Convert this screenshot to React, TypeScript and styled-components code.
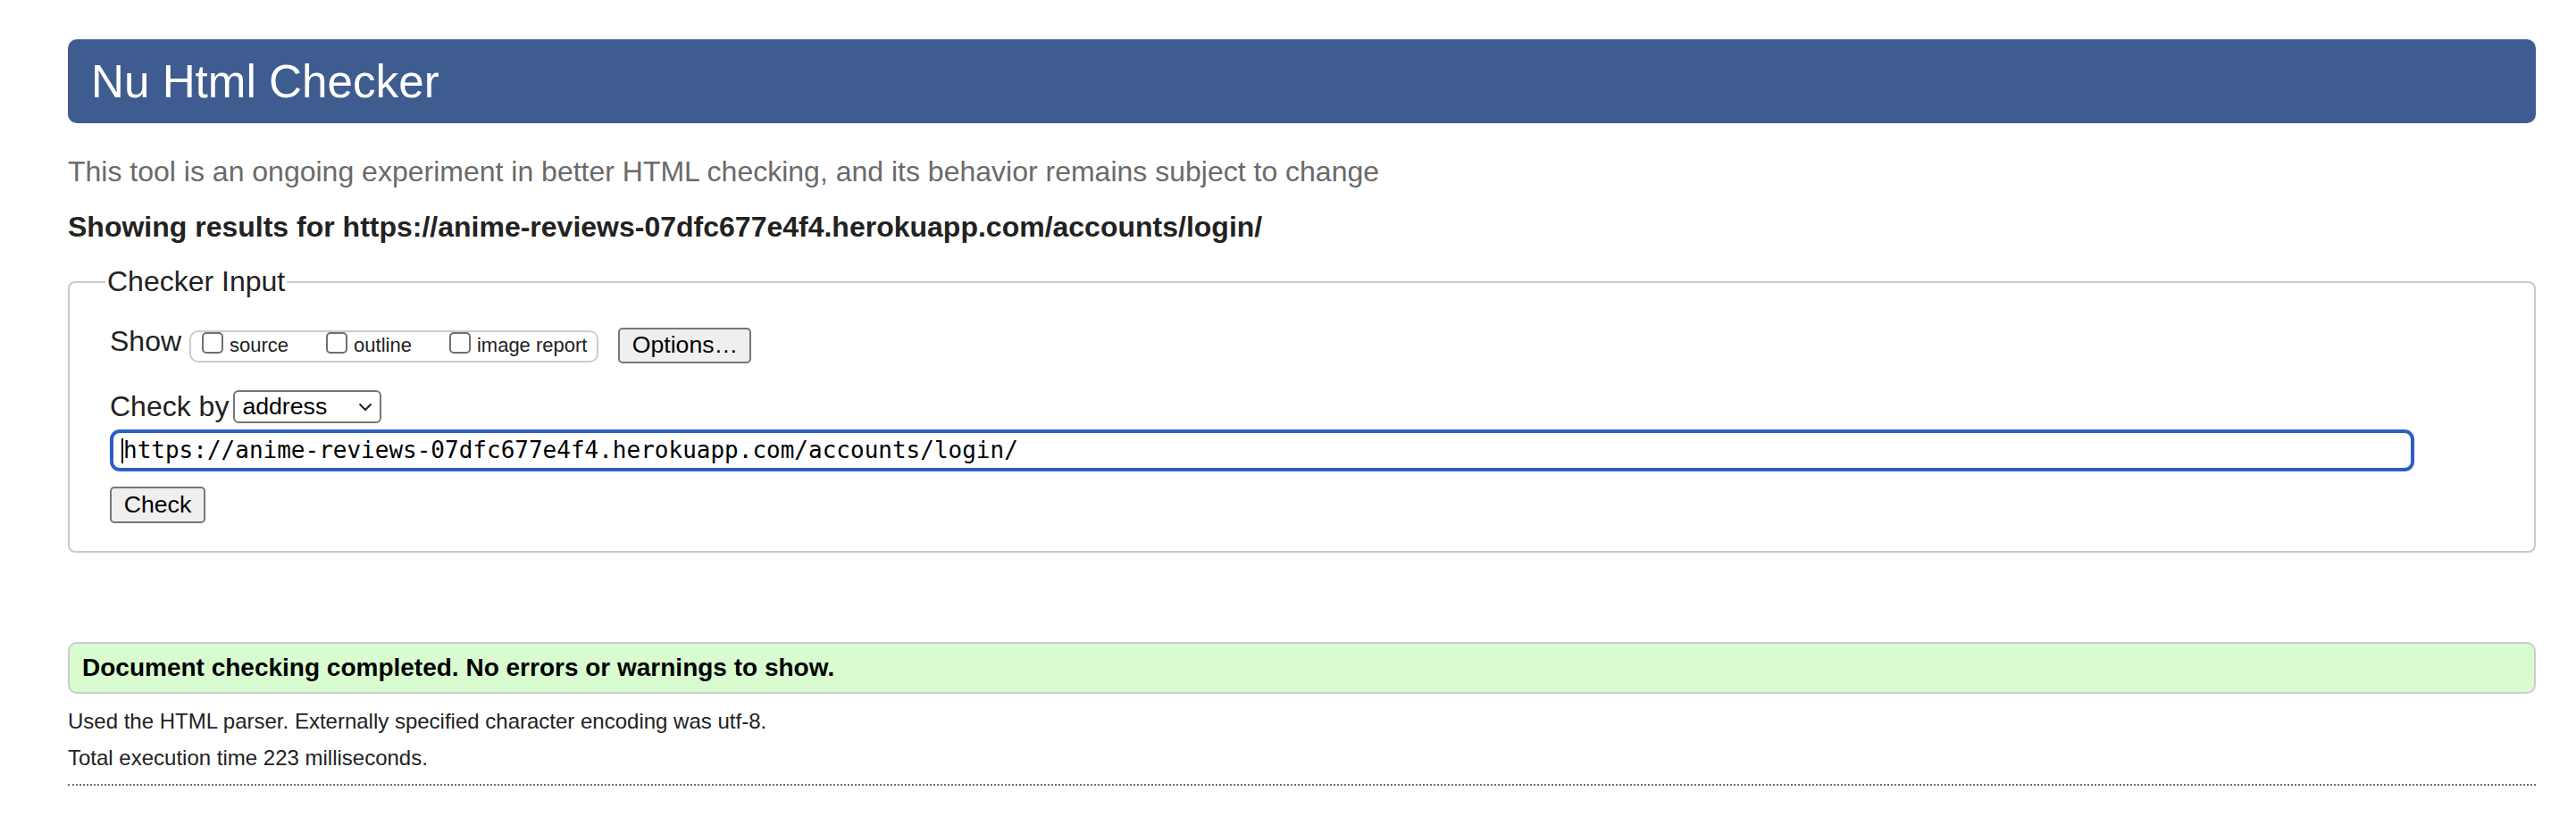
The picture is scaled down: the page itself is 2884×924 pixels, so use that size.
import styled, { createGlobalStyle } from "styled-components";

const GlobalStyle = createGlobalStyle`
  body {
    margin: 0;
    background: #ffffff;
    font-family: "Liberation Sans", Arial, Helvetica, sans-serif;
    color: #222222;
  }
`;

const Page = styled.div`
  padding: 44px 45px 40px 76px;
`;

const Title = styled.h1`
  margin: 0;
  height: 94px;
  display: flex;
  align-items: center;
  padding: 0 26px;
  background: #3e5c8f;
  border-radius: 10px;
  color: #ffffff;
  font-size: 51.2px;
  font-weight: normal;
`;

const Lead = styled.p`
  margin: 36px 0 0;
  font-size: 32px;
  color: #6a6a6a;
`;

const Results = styled.h2`
  margin: 25px 0 0;
  font-size: 32px;
  font-weight: bold;
  color: #222222;
`;

const Fieldset = styled.fieldset`
  margin: 24px 0 0;
  padding: 30px 40px 31px 45px;
  border: 2px solid #c8c8c8;
  border-radius: 8px;
  min-width: 0;
`;

const Legend = styled.legend`
  margin-left: -5px;
  padding: 0 2px;
  font-size: 32px;
  color: #222222;
`;

const Row = styled.div<{ $mt?: number }>`
  display: flex;
  align-items: center;
  margin-top: ${(p) => p.$mt ?? 0}px;
`;

const ShowRow = styled.div`
  display: flex;
  align-items: flex-start;
`;

const Label = styled.span`
  font-size: 32px;
  color: #222222;
`;

const OptionGroup = styled.div`
  display: flex;
  align-items: flex-start;
  margin: 5.5px 0 0 9px;
  height: 32px;
  padding: 0 11px 0 12px;
  border: 2px solid #cccccc;
  border-radius: 10px;
`;

const Choice = styled.label<{ $last?: boolean }>`
  display: flex;
  align-items: flex-start;
  gap: 7px;
  margin-right: ${(p) => (p.$last ? 0 : 42)}px;
  font-size: 22px;
  color: #222222;

  span {
    padding-top: 2px;
  }
`;

const Box = styled.input`
  appearance: none;
  width: 24px;
  height: 24px;
  margin: 0;
  border: 2px solid #6f6f6f;
  border-radius: 5px;
  background: #ffffff;
`;

const Button = styled.button<{ $w: number; $h: number; $mt?: number; $ml?: number }>`
  width: ${(p) => p.$w}px;
  height: ${(p) => p.$h}px;
  margin-top: ${(p) => p.$mt ?? 0}px;
  margin-left: ${(p) => p.$ml ?? 0}px;
  padding: 0;
  background: #efefef;
  border: 2px solid #767676;
  border-radius: 5px;
  font-family: "Liberation Sans", Arial, sans-serif;
  font-size: 26.67px;
  color: #000000;
`;

const SelectWrap = styled.div`
  position: relative;
  margin-left: 5px;
  width: 166px;
  height: 37px;

  svg {
    position: absolute;
    right: 10px;
    top: 14px;
    pointer-events: none;
  }
`;

const Select = styled.select`
  appearance: none;
  width: 100%;
  height: 100%;
  padding: 0 0 0 8px;
  background: #ffffff;
  border: 2px solid #767676;
  border-radius: 6px;
  font-family: "Liberation Sans", Arial, sans-serif;
  font-size: 26.67px;
  color: #000000;
`;

const UrlWrap = styled.div`
  position: relative;
  margin-top: 7px;
  width: 2580px;
  height: 47px;
`;

const UrlInput = styled.input`
  box-sizing: border-box;
  width: 100%;
  height: 100%;
  padding: 0 0 0 11px;
  border: 4px solid #2b5fc6;
  border-radius: 11px;
  outline: none;
  font-family: "DejaVu Sans Mono", "Liberation Mono", monospace;
  font-size: 26px;
  color: #000000;
`;

const Caret = styled.span`
  position: absolute;
  left: 13px;
  top: 10px;
  width: 2px;
  height: 28px;
  background: #000000;
`;

const Success = styled.div`
  margin-top: 100px;
  height: 54px;
  display: flex;
  align-items: center;
  padding-left: 14px;
  background: #d8fcd0;
  border: 2px solid #cccccc;
  border-radius: 10px;
  font-size: 28px;
  font-weight: bold;
  color: #000000;
`;

const Note = styled.p<{ $mt: number }>`
  margin: ${(p) => p.$mt}px 0 0;
  font-size: 24px;
  color: #222222;
`;

const Rule = styled.hr`
  margin: 15px 0 0;
  border: none;
  border-top: 2px dotted #6f6f6f;
`;

const url = "https://anime-reviews-07dfc677e4f4.herokuapp.com/accounts/login/";

export default function App() {
  return (
    <Page>
      <GlobalStyle />
      <Title>Nu Html Checker</Title>
      <Lead>
        This tool is an ongoing experiment in better HTML checking, and its behavior remains subject to change
      </Lead>
      <Results>Showing results for {url}</Results>

      <Fieldset>
        <Legend>Checker Input</Legend>
        <ShowRow>
          <Label>Show</Label>
          <OptionGroup>
            <Choice>
              <Box type="checkbox" />
              <span>source</span>
            </Choice>
            <Choice>
              <Box type="checkbox" />
              <span>outline</span>
            </Choice>
            <Choice $last>
              <Box type="checkbox" />
              <span>image report</span>
            </Choice>
          </OptionGroup>
          <Button type="button" $w={149} $h={40} $mt={2.5} $ml={22}>
            Options…
          </Button>
        </ShowRow>

        <Row $mt={30}>
          <Label>Check by</Label>
          <SelectWrap>
            <Select defaultValue="address">
              <option value="address">address</option>
              <option value="upload">file upload</option>
              <option value="text">text input</option>
            </Select>
            <svg width="16" height="10" viewBox="0 0 16 10">
              <path d="M1.5 1.5 L8 8 L14.5 1.5" fill="none" stroke="#222" strokeWidth="2" />
            </svg>
          </SelectWrap>
        </Row>

        <UrlWrap>
          <UrlInput type="url" defaultValue={url} />
          <Caret />
        </UrlWrap>

        <Row $mt={17}>
          <Button type="submit" $w={107} $h={41}>
            Check
          </Button>
        </Row>
      </Fieldset>

      <Success>Document checking completed. No errors or warnings to show.</Success>
      <Note $mt={17}>Used the HTML parser. Externally specified character encoding was utf-8.</Note>
      <Note $mt={13}>Total execution time 223 milliseconds.</Note>
      <Rule />
    </Page>
  );
}
